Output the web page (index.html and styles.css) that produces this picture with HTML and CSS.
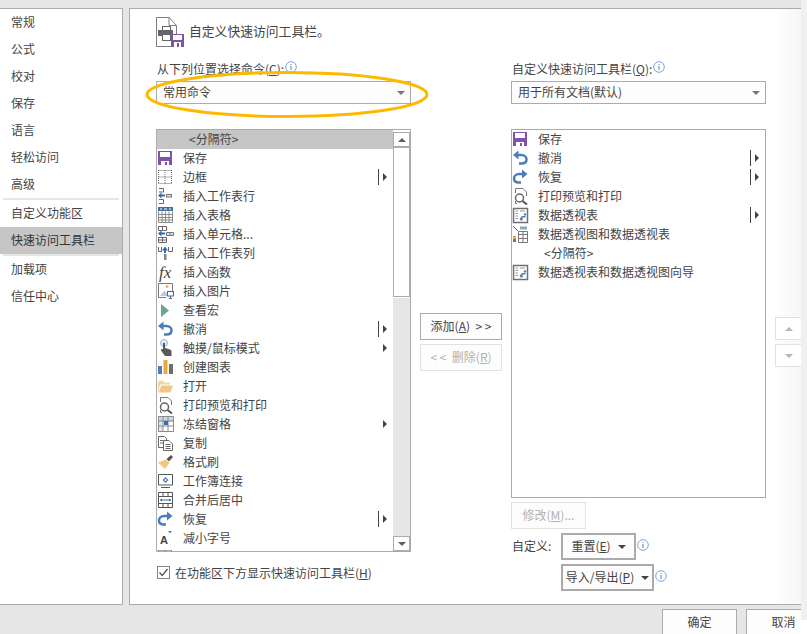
FILE: index.html
```html
<!DOCTYPE html>
<html lang="zh-CN">
<head>
    <meta charset="UTF-8">
    <meta name="viewport" content="width=device-width, initial-scale=1.0">
    <title>自定义快速访问工具栏</title>
    <link rel="stylesheet" href="styles.css">
</head>
<body>

<svg class="sprite" xmlns="http://www.w3.org/2000/svg">
    <symbol id="i-save" viewBox="0 0 18 19">
        <rect x="1" y="2" width="14" height="14" fill="#8153a7"/>
        <rect x="3" y="3" width="10" height="5" fill="#fff"/>
        <rect x="4" y="12" width="8" height="4" fill="#fff"/>
        <rect x="8" y="13" width="2" height="3" fill="#8153a7"/>
    </symbol>
    <symbol id="i-border" viewBox="0 0 18 19">
        <path d="M1.500 2.500H14.500M1.500 15.500H14.500M1.500 9H14.500M1.500 2V16M14.500 2V16M8 2V16" fill="none" stroke="#666" stroke-dasharray="1 1"/>
    </symbol>
    <symbol id="i-row" viewBox="0 0 18 19">
        <path d="M2 1.500H6.500V5H2M2 12.500H6.500V16.500H2" fill="none" stroke="#666"/>
        <path d="M1 8.500L4.500 5.500V7.500H8V9.500H4.500V11.500Z" fill="#2f6fad"/>
        <rect x="9.500" y="7.500" width="5" height="2.500" fill="#ddd" stroke="#777"/>
    </symbol>
    <symbol id="i-table" viewBox="0 0 18 19">
        <rect x="1" y="1" width="15" height="15" fill="#fff" stroke="none"/>
        <path d="M1.500 5.500V16.500H15.500V5.500M1.500 8.500H15.500M1.500 11.500H15.500M1.500 14H15.500M5 5.500V16.500M8.500 5.500V16.500M12 5.500V16.500" fill="none" stroke="#8a8a8a"/>
        <rect x="1" y="1" width="15" height="4" fill="#41719c"/>
        <path d="M3 3H5M7 3H10M12 3H14" stroke="#fff"/>
    </symbol>
    <symbol id="i-cell" viewBox="0 0 18 19">
        <path d="M1.500 1.500H9.500V5.500H1.500ZM5.500 1.500V5.500M1.500 12.500H9.500V17.500H1.500ZM5.500 12.500V17.500M1.500 15H9.500" fill="none" stroke="#666"/>
        <path d="M1 8.500L4.500 5.500V7.500H8V9.500H4.500V11.500Z" fill="#2f6fad"/>
        <path d="M9.500 7.500H16.500V10.500H9.500ZM13 7.500V10.500" fill="#ddd" stroke="#777"/>
    </symbol>
    <symbol id="i-col" viewBox="0 0 18 19">
        <path d="M1.500 3V7.500H4.500V3M11.500 3V7.500H15.500V3" fill="none" stroke="#666"/>
        <path d="M8 2.500L11 6.500H9V9H7V6.500H5Z" fill="#2f6fad"/>
        <rect x="7" y="10" width="2.500" height="6" fill="#888"/>
    </symbol>
    <symbol id="i-pic" viewBox="0 0 18 19">
        <path d="M1.500 1.500H15.500V9M9 15.500H1.500V1.500" fill="none" stroke="#777"/>
        <path d="M3 14L7.500 8.500L11 13V14Z" fill="#b6cbe3"/>
        <circle cx="10" cy="4.500" r="1.500" fill="#efb65c"/>
        <rect x="10.500" y="9.500" width="6" height="4.500" fill="#fff" stroke="#2f6fad"/>
        <path d="M12 16.500H15M13.500 14V16.500" stroke="#2f6fad"/>
    </symbol>
    <symbol id="i-play" viewBox="0 0 18 19">
        <path d="M4 3L12 9.500L4 16Z" fill="#6aa58d"/>
    </symbol>
    <symbol id="i-undo" viewBox="0 0 18 19">
        <path d="M1 6L6.500 1.500V10.500Z" fill="#4a7ebb"/>
        <path d="M5 6H9.500C12.500 6 14.500 8 14.500 10.500C14.500 13 12.500 14.500 9.500 14.500H7" fill="none" stroke="#4a7ebb" stroke-width="2.500"/>
    </symbol>
    <symbol id="i-redo" viewBox="0 0 18 19">
        <path d="M15.500 6L10 1.500V10.500Z" fill="#4a7ebb"/>
        <path d="M11 6H7C4 6 2 8 2 10.500C2 13 4 14.500 7 14.500H9" fill="none" stroke="#4a7ebb" stroke-width="2.500"/>
    </symbol>
    <symbol id="i-touch" viewBox="0 0 18 19">
        <circle cx="7" cy="4" r="3.500" fill="#e4ecf5" stroke="#9db7d5"/>
        <path d="M6 4.500C6 3.500 8 3.500 8 4.500V9L13 10.500C14 11 14.500 11.500 14.500 12.500V17H8L4 11.500C3.500 10.500 5 9.500 6 10.500Z" fill="#595959"/>
    </symbol>
    <symbol id="i-chart" viewBox="0 0 18 19">
        <rect x="1" y="8" width="4" height="8" fill="#4a7ebb"/>
        <rect x="6.500" y="2" width="4" height="14" fill="#eda83c"/>
        <rect x="12" y="6" width="4" height="10" fill="#6d6d6d"/>
    </symbol>
    <symbol id="i-open" viewBox="0 0 18 19">
        <path d="M1 5V15L3.500 7.500H13V5.500H7L6 3.500H2Z" fill="#f0d7a8"/>
        <path d="M1.500 15.500L4.300 8.500H16L13.500 15.500Z" fill="#f0c882"/>
    </symbol>
    <symbol id="i-preview" viewBox="0 0 18 19">
        <path d="M3.500 6V1.500H11L14.500 5V9M5 16.500H3.500V14" fill="#fff" stroke="#777"/>
        <circle cx="7.500" cy="11" r="4" fill="#fff" stroke="#666" stroke-width="1.500"/>
        <path d="M10.500 14L15 17.500" stroke="#555" stroke-width="2"/>
    </symbol>
    <symbol id="i-freeze" viewBox="0 0 18 19">
        <rect x="1" y="1" width="15" height="6" fill="#c9d9ea"/>
        <rect x="1" y="7" width="5" height="9" fill="#dce6f1"/>
        <path d="M1.500 1.500H16.500V16.500H1.500ZM1.500 6H16.500M1.500 11H16.500M6 1.500V16.500M11 1.500V16.500" fill="none" stroke="#8a8a8a"/>
        <rect x="7" y="6" width="4" height="4" fill="#2f6fad"/>
    </symbol>
    <symbol id="i-copy" viewBox="0 0 18 19">
        <path d="M1.500 2.500H7.500L9.500 4.500V13.500H1.500Z" fill="#fff" stroke="#666"/>
        <path d="M3 6.500H6M3 9H6" stroke="#666"/>
        <path d="M6.500 6.500H12L15.500 10V16.500H6.500Z" fill="#fff" stroke="#666"/>
        <path d="M8.500 10.500H13.500M8.500 12.500H13.500M8.500 14.500H13.500" stroke="#666"/>
    </symbol>
    <symbol id="i-painter" viewBox="0 0 18 19">
        <path d="M9.500 6L14 2L16 4L12 8.500Z" fill="#555"/>
        <path d="M9 6.500L12.500 10L8 16L1 9.500Z" fill="#f0c882"/>
    </symbol>
    <symbol id="i-link" viewBox="0 0 18 19">
        <path d="M1.500 2.500H15.500V13H1.500Z" fill="#fff" stroke="#555"/>
        <path d="M4 15.500H13" stroke="#555"/>
        <path d="M8.500 5L11.500 8L8.500 11L5.500 8Z" fill="#4a7ebb"/>
        <circle cx="8.500" cy="8" r="1" fill="#fff"/>
    </symbol>
    <symbol id="i-merge" viewBox="0 0 18 19">
        <path d="M1.500 1.500H15.500V16.500H1.500ZM1.500 5.500H15.500M1.500 12.500H15.500M6 1.500V5.500M11 1.500V5.500M6 12.500V16.500M11 12.500V16.500" fill="none" stroke="#555"/>
        <path d="M3 9H14" stroke="#2f6fad"/>
        <path d="M3 9L5 7.500V10.500ZM14 9L12 7.500V10.500Z" fill="#2f6fad"/>
    </symbol>
    <symbol id="i-pivot" viewBox="0 0 18 19">
        <rect x="1.500" y="2.500" width="14" height="14" fill="#fff" stroke="#707070" stroke-width="1.500"/>
        <path d="M3.500 5H6M8 5H13M3.500 7.500H6M3.500 10H6M3.500 12.500H6" stroke="#999"/>
        <path d="M13 6.500L14.500 9H13.500V11.500H10.500V13H11.500L9 15L7.500 12.500L9.500 11V10H12.500V9H11.500Z" fill="#4a7ebb"/>
    </symbol>
    <symbol id="i-pivotchart" viewBox="0 0 18 19">
        <path d="M1 1L6 6" stroke="#666"/>
        <rect x="1" y="11" width="3" height="6" fill="#eda83c"/>
        <rect x="1" y="14" width="3" height="3" fill="#4a7ebb"/>
        <path d="M6.500 6.500H15.500V17.500H6.500ZM6.500 9.500H15.500M11 6.500V17.500M6.500 13.500H15.500" fill="#fff" stroke="#777"/>
        <rect x="8" y="1.500" width="7" height="3" fill="#8aa5c4"/>
    </symbol>
    <symbol id="i-info" viewBox="0 0 12 12">
        <circle cx="6" cy="6" r="5.300" fill="#fff" stroke="#7ea2d8"/>
        <rect x="5.500" y="5" width="1" height="4" fill="#5b7fb8"/>
        <rect x="5.500" y="3" width="1" height="1" fill="#5b7fb8"/>
    </symbol>
</svg>

<div class="page">
    <div class="dialog">
        <div class="content">
            <nav class="sidebar">
                <div class="nav-item">常规</div>
                <div class="nav-item">公式</div>
                <div class="nav-item">校对</div>
                <div class="nav-item">保存</div>
                <div class="nav-item">语言</div>
                <div class="nav-item">轻松访问</div>
                <div class="nav-item">高级</div>
                <div class="nav-divider"></div>
                <div class="nav-item">自定义功能区</div>
                <div class="nav-item active">快速访问工具栏</div>
                <div class="nav-divider"></div>
                <div class="nav-item">加载项</div>
                <div class="nav-item">信任中心</div>
            </nav>

            <main class="main">
                <header class="header">
                    <svg class="header-icon" width="28" height="31" viewBox="0 0 28 31">
                        <path d="M.5.500H13L20.500 8.500V29.500H.5Z" fill="#fff" stroke="#7f7f7f"/>
                        <path d="M13 .5V8.500H20.500" fill="none" stroke="#7f7f7f"/>
                        <rect x="6.500" y="9.500" width="8" height="5" fill="#fff" stroke="#666"/>
                        <rect x="2" y="13" width="15" height="6" fill="#666"/>
                        <rect x="6.500" y="17.500" width="8" height="6" fill="#fff" stroke="#666"/>
                        <rect x="15" y="17" width="13" height="13" fill="#8153a7"/>
                        <rect x="17" y="18" width="9" height="5" fill="#fff"/>
                        <rect x="18" y="25" width="7" height="5" fill="#fff"/>
                        <rect x="21" y="26" width="2" height="4" fill="#8153a7"/>
                    </svg>
                    <h1 class="title">自定义快速访问工具栏。</h1>
                </header>

                <div class="columns">
                    <section class="col">
                        <div class="field-label">从下列位置选择命令(<u>C</u>):<svg class="info" width="12" height="12"><use href="#i-info"/></svg></div>
                        <div class="combo">常用命令<span class="combo-arrow"></span></div>

                        <div class="list list-left">
                            <div class="list-rows">
                                <div class="row sep selected">&lt;分隔符&gt;</div>
                                <div class="row"><svg class="ico"><use href="#i-save"/></svg>保存</div>
                                <div class="row"><svg class="ico"><use href="#i-border"/></svg>边框<span class="sub bar"></span></div>
                                <div class="row"><svg class="ico"><use href="#i-row"/></svg>插入工作表行</div>
                                <div class="row"><svg class="ico"><use href="#i-table"/></svg>插入表格</div>
                                <div class="row"><svg class="ico"><use href="#i-cell"/></svg>插入单元格...</div>
                                <div class="row"><svg class="ico"><use href="#i-col"/></svg>插入工作表列</div>
                                <div class="row"><svg class="ico" viewBox="0 0 18 19"><text class="fx" x="2" y="15">fx</text></svg>插入函数</div>
                                <div class="row"><svg class="ico"><use href="#i-pic"/></svg>插入图片</div>
                                <div class="row"><svg class="ico"><use href="#i-play"/></svg>查看宏</div>
                                <div class="row"><svg class="ico"><use href="#i-undo"/></svg>撤消<span class="sub bar"></span></div>
                                <div class="row"><svg class="ico"><use href="#i-touch"/></svg>触摸/鼠标模式<span class="sub"></span></div>
                                <div class="row"><svg class="ico"><use href="#i-chart"/></svg>创建图表</div>
                                <div class="row"><svg class="ico"><use href="#i-open"/></svg>打开</div>
                                <div class="row"><svg class="ico"><use href="#i-preview"/></svg>打印预览和打印</div>
                                <div class="row"><svg class="ico"><use href="#i-freeze"/></svg>冻结窗格<span class="sub"></span></div>
                                <div class="row"><svg class="ico"><use href="#i-copy"/></svg>复制</div>
                                <div class="row"><svg class="ico"><use href="#i-painter"/></svg>格式刷</div>
                                <div class="row"><svg class="ico"><use href="#i-link"/></svg>工作簿连接</div>
                                <div class="row"><svg class="ico"><use href="#i-merge"/></svg>合并后居中</div>
                                <div class="row"><svg class="ico"><use href="#i-redo"/></svg>恢复<span class="sub bar"></span></div>
                                <div class="row"><svg class="ico" viewBox="0 0 18 19"><text class="font-a" x="3" y="15">A</text><path d="M11 2H15L13 4.500Z" fill="#4a7ebb"/></svg>减小字号</div>
                                <div class="row"><svg class="ico"><use href="#i-border"/></svg></div>
                            </div>
                            <div class="scrollbar">
                                <div class="sb-btn"><span class="arrow-up"></span></div>
                                <div class="sb-thumb"></div>
                                <div class="sb-track"></div>
                                <div class="sb-btn"><span class="arrow-down"></span></div>
                            </div>
                        </div>

                        <label class="check-row">
                            <svg class="check" width="13" height="13" viewBox="0 0 13 13">
                                <rect x=".5" y=".5" width="12" height="12" fill="#fff" stroke="#858585"/>
                                <path d="M2.500 6.500L5.200 9.500L10.500 3" fill="none" stroke="#555" stroke-width="1.300"/>
                            </svg>
                            <span>在功能区下方显示快速访问工具栏(<u>H</u>)</span>
                        </label>
                    </section>

                    <section class="col-mid">
                        <button class="btn add">添加(<u>A</u>)  &gt; &gt;</button>
                        <button class="btn disabled remove">&lt; &lt;  删除(<u>R</u>)</button>
                    </section>

                    <section class="col">
                        <div class="field-label">自定义快速访问工具栏(<u>Q</u>):<svg class="info" width="12" height="12"><use href="#i-info"/></svg></div>
                        <div class="combo">用于所有文档(默认)<span class="combo-arrow"></span></div>

                        <div class="list list-right">
                            <div class="list-rows">
                                <div class="row"><svg class="ico"><use href="#i-save"/></svg>保存</div>
                                <div class="row"><svg class="ico"><use href="#i-undo"/></svg>撤消<span class="sub bar"></span></div>
                                <div class="row"><svg class="ico"><use href="#i-redo"/></svg>恢复<span class="sub bar"></span></div>
                                <div class="row"><svg class="ico"><use href="#i-preview"/></svg>打印预览和打印</div>
                                <div class="row"><svg class="ico"><use href="#i-pivot"/></svg>数据透视表<span class="sub bar"></span></div>
                                <div class="row"><svg class="ico"><use href="#i-pivotchart"/></svg>数据透视图和数据透视表</div>
                                <div class="row sep">&lt;分隔符&gt;</div>
                                <div class="row"><svg class="ico"><use href="#i-pivot"/></svg>数据透视表和数据透视图向导</div>
                            </div>
                        </div>

                        <button class="btn disabled modify">修改(<u>M</u>)...</button>

                        <div class="custom-row">
                            <span class="custom-label">自定义:</span>
                            <button class="btn strong reset">重置(<u>E</u>)<span class="caret"></span></button>
                            <svg class="info" width="12" height="12"><use href="#i-info"/></svg>
                        </div>
                        <div class="custom-row indent">
                            <button class="btn strong import">导入/导出(<u>P</u>)<span class="caret"></span></button>
                            <svg class="info" width="12" height="12"><use href="#i-info"/></svg>
                        </div>
                    </section>

                    <section class="col-move">
                        <button class="move"><span class="arrow-up light"></span></button>
                        <button class="move"><span class="arrow-down light"></span></button>
                    </section>
                </div>

                <svg class="circle-mark" width="290" height="54" viewBox="0 0 290 54">
                    <ellipse cx="145" cy="26.500" rx="140" ry="22" fill="none" stroke="#fdb900" stroke-width="3"/>
                </svg>
            </main>
        </div>

        <footer class="footer">
            <button class="btn foot">确定</button>
            <button class="btn foot">取消</button>
        </footer>
    </div>
    <div class="edge"></div>
</div>

</body>
</html>
```

FILE: styles.css
```css
* {
    box-sizing: border-box;
}

body {
    margin: 0;
    background: #fff;
    color: #444;
    font-family: "Noto Sans CJK SC", "Noto Sans", sans-serif;
    font-size: 12px;
}

.sprite {
    display: none;
}

.page {
    display: flex;
    width: 807px;
    height: 634px;
    overflow: hidden;
}

.dialog {
    width: 801px;
    height: 634px;
    padding-top: 8px;
    background: #e6e6e6;
    display: flex;
    flex-direction: column;
    overflow: hidden;
}

.edge {
    width: 6px;
    height: 620px;
    background: #f0f0f0;
}

.content {
    display: flex;
    gap: 6px;
    height: 597px;
}

/* left nav */
.sidebar {
    width: 123px;
    background: #fff;
    border-top: 1px solid #ababab;
    border-right: 1px solid #ababab;
    border-bottom: 1px solid #ababab;
}

.nav-item {
    height: 27px;
    line-height: 25px;
    padding-left: 11px;
}

.nav-item.active {
    background: #c6c6c6;
    color: #333;
}

.nav-divider {
    height: 2px;
    margin: 0 3px;
    background: #e6e6e6;
}

/* main panel */
.main {
    position: relative;
    flex: 1;
    padding: 8px 0 0 26px;
    border-top: 1px solid #ababab;
    border-left: 1px solid #ababab;
    border-bottom: 1px solid #ababab;
    background: linear-gradient(to right, #fff 96%, #f6f6f6 100%);
}

.header {
    display: flex;
    align-items: center;
    height: 30px;
    margin-bottom: 13px;
}

.header-icon {
    margin-right: 5px;
    flex: none;
}

.title {
    margin: 0 0 2px;
    font-size: 12.8px;
    font-weight: normal;
    line-height: 28px;
}

.columns {
    display: grid;
    grid-template-columns: 255px 82px 255px 26px;
    gap: 9px;
}

.col {
    display: flex;
    flex-direction: column;
}

.field-label {
    height: 17px;
    line-height: 17px;
    padding-left: 1px;
    margin-bottom: 4px;
    display: flex;
    align-items: center;
    white-space: pre;
}

.info {
    flex: none;
}

.field-label .info {
    margin: -3px 0 0 1px;
}

.combo {
    position: relative;
    height: 23px;
    line-height: 19px;
    padding-left: 6px;
    border: 1px solid #ababab;
    background: #fdfdfd;
}

.combo-arrow {
    position: absolute;
    right: 5px;
    top: 9px;
    border-left: 4px solid transparent;
    border-right: 4px solid transparent;
    border-top: 4px solid #777;
}

/* list boxes */
.list {
    display: flex;
    margin-top: 25px;
    border: 1px solid #ababab;
    background: #fff;
    overflow: hidden;
}

.list-left {
    height: 423px;
}

.list-right {
    height: 369px;
}

.list-rows {
    flex: 1;
    min-width: 0;
    overflow: hidden;
}

.row {
    display: flex;
    align-items: flex-start;
    height: 19px;
    line-height: 17px;
    padding-right: 6px;
    white-space: nowrap;
}

.row.sep {
    padding-left: 32px;
}

.row.selected {
    background: #c6c6c6;
}

.ico {
    width: 18px;
    height: 19px;
    margin-right: 8px;
    flex: none;
}

.fx {
    font-family: "Liberation Serif", serif;
    font-style: italic;
    font-size: 17px;
    fill: #444;
}

.font-a {
    font-family: "Liberation Sans", sans-serif;
    font-weight: bold;
    font-size: 11px;
    fill: #444;
}

.sub {
    position: relative;
    margin-left: auto;
    margin-top: 5px;
    width: 4px;
    height: 8px;
    border-left: 4px solid #444;
    border-top: 4px solid transparent;
    border-bottom: 4px solid transparent;
}

.sub.bar::before {
    content: "";
    position: absolute;
    left: -9px;
    top: -8px;
    width: 1px;
    height: 16px;
    background: #444;
}

.scrollbar {
    width: 17px;
    flex: none;
    padding-top: 2px;
    display: flex;
    flex-direction: column;
    background: #e6e6e6;
}

.list-left .scrollbar {
    background: linear-gradient(to bottom, #fff 168px, #e6e6e6 168px);
}

.sb-btn {
    height: 15px;
    flex: none;
    display: flex;
    align-items: center;
    justify-content: center;
    border: 1px solid #ababab;
    background: #fff;
}

.sb-thumb {
    height: 150px;
    flex: none;
    border: 1px solid #ababab;
    background: #fff;
}

.sb-track {
    flex: 1;
    margin-bottom: 2px;
}

.arrow-up,
.arrow-down {
    border-left: 4px solid transparent;
    border-right: 4px solid transparent;
}

.arrow-up {
    border-bottom: 4px solid #606060;
}

.arrow-down {
    border-top: 4px solid #606060;
}

.arrow-up.light {
    border-bottom-color: #b4b4b4;
}

.arrow-down.light {
    border-top-color: #b4b4b4;
}

.check-row {
    display: flex;
    align-items: center;
    height: 16px;
    margin-top: 12px;
    padding-left: 1px;
}

.check {
    margin-right: 5px;
    flex: none;
}

/* buttons */
.btn {
    display: block;
    padding: 0 0 2px;
    height: 27px;
    border: 1px solid #ababab;
    background: #fdfdfd;
    color: #444;
    font: inherit;
    white-space: pre;
}

.btn.disabled {
    border-color: #e1e1e1;
    color: #b1b1b1;
}

.btn.strong {
    border-width: 2px;
    color: #444;
}

.col-mid {
    padding-top: 253px;
}

.add {
    width: 82px;
}

.remove {
    width: 82px;
    margin-top: 4px;
}

.modify {
    width: 75px;
    margin-top: 4px;
}

.custom-row {
    display: flex;
    align-items: flex-start;
    margin-top: 4px;
}

.custom-row.indent {
    padding-left: 50px;
}

.custom-label {
    width: 50px;
    padding-left: 1px;
    line-height: 25px;
}

.reset {
    width: 75px;
}

.import {
    width: 93px;
}

.custom-row .info {
    margin: 6px 0 0 1px;
}

.caret {
    display: inline-block;
    margin-left: 7px;
    vertical-align: 2px;
    border-left: 4px solid transparent;
    border-right: 4px solid transparent;
    border-top: 4px solid #444;
}

.col-move {
    padding-top: 257px;
}

.move {
    display: flex;
    align-items: center;
    justify-content: center;
    width: 26px;
    height: 23px;
    margin-bottom: 4px;
    padding: 0;
    border: 1px solid #e1e1e1;
    border-right: 0;
    background: #fff;
}

.circle-mark {
    position: absolute;
    left: 12px;
    top: 59px;
}

.footer {
    display: flex;
    justify-content: flex-end;
    gap: 9px;
    height: 29px;
    padding-top: 4px;
    margin-right: -20px;
}

.foot {
    width: 75px;
    height: 27px;
    flex: none;
}
```
